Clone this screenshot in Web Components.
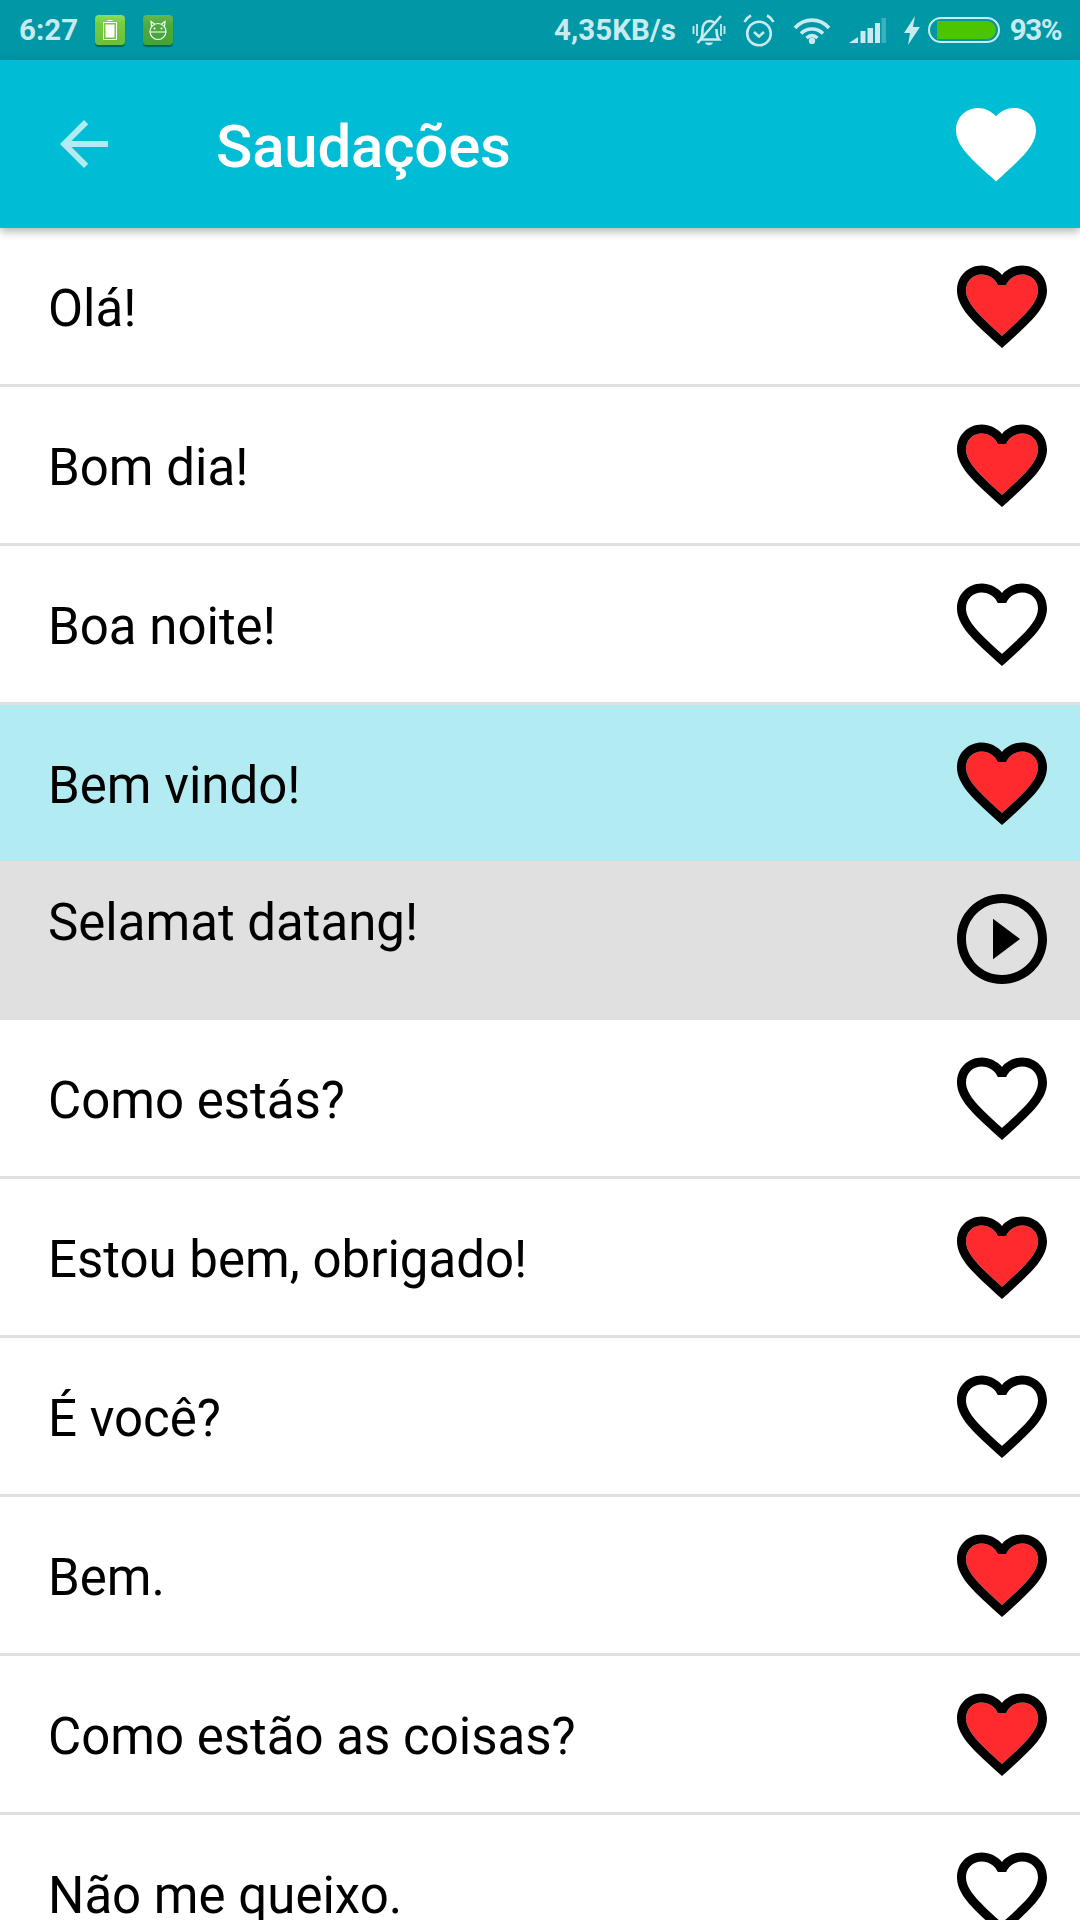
<!DOCTYPE html>
<html lang="pt">
<head>
<meta charset="utf-8">
<title>Saudações</title>
<style>
  html, body { margin: 0; height: 1920px; overflow: hidden; background: #fff; font-family: Roboto, sans-serif; }
  body { display: flex; flex-direction: column; }
</style>
</head>
<body>
<status-bar></status-bar>
<app-toolbar title="Saudações"></app-toolbar>
<phrase-list>
  <phrase-row icon="full">Olá!</phrase-row>
  <phrase-row icon="full">Bom dia!</phrase-row>
  <phrase-row icon="empty">Boa noite!</phrase-row>
  <phrase-row icon="full" state="active">Bem vindo!</phrase-row>
  <phrase-row icon="play" state="open">Selamat datang!</phrase-row>
  <phrase-row icon="empty">Como estás?</phrase-row>
  <phrase-row icon="full">Estou bem, obrigado!</phrase-row>
  <phrase-row icon="empty">É você?</phrase-row>
  <phrase-row icon="full">Bem.</phrase-row>
  <phrase-row icon="full">Como estão as coisas?</phrase-row>
  <phrase-row icon="empty">Não me queixo.</phrase-row>
</phrase-list>

<script>
const HEART_OUTLINE = 'M16.5 3c-1.74 0-3.41.81-4.5 2.09C10.91 3.81 9.24 3 7.5 3 4.42 3 2 5.42 2 8.5c0 3.78 3.4 6.86 8.55 11.54L12 21.35l1.45-1.32C18.6 15.36 22 12.28 22 8.5 22 5.42 19.58 3 16.5 3zm-4.4 15.55l-.1.1-.1-.1C7.14 14.24 4 11.39 4 8.5 4 6.5 5.5 5 7.5 5c1.54 0 3.04.99 3.57 2.36h1.87C13.46 5.99 14.96 5 16.5 5c2 0 3.5 1.5 3.5 3.5 0 2.89-3.14 5.74-7.9 10.05z'
const HEART_INNER = 'M12.1 18.55l-.1.1-.1-.1C7.14 14.24 4 11.39 4 8.5 4 6.5 5.5 5 7.5 5c1.54 0 3.04.99 3.57 2.36h1.87C13.46 5.99 14.96 5 16.5 5c2 0 3.5 1.5 3.5 3.5 0 2.89-3.14 5.74-7.9 10.05z'
const PLAY_OUTLINE = 'M10 16.5l6-4.5-6-4.5v9zM12 2C6.48 2 2 6.48 2 12s4.48 10 10 10 10-4.48 10-10S17.52 2 12 2zm0 18c-4.41 0-8-3.59-8-8s3.59-8 8-8 8 3.59 8 8-3.59 8-8 8z'

class StatusBar extends HTMLElement {
  constructor() {
    super();
    this.attachShadow({ mode: 'open' })
    this.shadowRoot.innerHTML = `
      <style>
        :host {
          display: flex;
          flex: none;
          height: 60px;
          align-items: center;
          justify-content: space-between;
          padding: 0 19px;
          background: #0097a7;
          color: #c9eaef;
          font: 700 29.5px Roboto, sans-serif;
          box-sizing: border-box;
        }
        div { display: flex; align-items: center; }
        svg { display: block; flex: none; }
        .app {
          width: 30px;
          height: 30px;
          border-radius: 4px;
          display: flex;
          align-items: center;
          justify-content: center;
          box-shadow: 0 2px 1px rgba(0, 60, 70, .55);
        }
        .time { width: 58px; margin-right: 18px; }
        .one { background: linear-gradient(#8fdc5c, #74cc3f 30%, #6bbf3a); margin-right: 18px; }
        .two { background: linear-gradient(#6ab84c, #4dab3f 30%, #43a33a); }
        .pct { letter-spacing: -1.5px; }
      </style>
      <div>
        <span class="time">6:27</span>
        <span class="app one">
          <svg width="14" height="20" viewBox="0 0 14 20">
            <path d="M4.5 .5h5" stroke="#fff" fill="none"/>
            <rect x=".5" y="2.5" width="13" height="17" fill="none" stroke="#fff"/>
            <rect x="2.5" y="4.5" width="9" height="13" fill="#fff"/>
          </svg>
        </span>
        <span class="app two">
          <svg width="24" height="24" viewBox="0 0 24 24" fill="none" stroke="#fff" stroke-width="1.2">
            <circle cx="12" cy="13.5" r="8"/>
            <path d="M4 14h16M5.5 8.5L5 3.5l3.5 2.5M18.5 8.5L19 3.5l-3.5 2.5"/>
            <circle cx="8.5" cy="10.5" r="1" fill="#fff" stroke="none"/>
            <circle cx="15.5" cy="10.5" r="1" fill="#fff" stroke="none"/>
          </svg>
        </span>
      </div>
      <div>
        <span style="margin-right:16px">4,35KB/s</span>
        <svg width="34" height="33" viewBox="0 0 34 33" fill="none" stroke="currentColor" stroke-width="2.6" style="margin-right:17px">
          <path d="M8.5 25.500c1.800-2.300 2-5 2-9.500 0-5.500 3-9 7-9 2.500 0 4.500 1.200 5.800 3M24.500 15c0 4.500.5 8 2.500 10.500H8.500"/>
          <path d="M13 28.500c1 3.500 7 3.500 8 0z" fill="currentColor" stroke="none"/>
          <path d="M5.500 29L29 2"/>
          <path d="M1.500 12v8M5 10v12M29 10v12M32.500 12v8" stroke-width="1.8"/>
        </svg>
        <svg width="32" height="33" viewBox="0 0 32 33" fill="none" stroke="currentColor" stroke-width="2.6" style="margin-right:18px">
          <circle cx="16" cy="19.5" r="11.8"/>
          <path d="M11 18l5 4.500 5-4.500"/>
          <path d="M1.500 8c1.500-3 3.500-5 6.500-6.500M30.500 8c-1.500-3-3.500-5-6.500-6.500"/>
        </svg>
        <svg width="38" height="27" viewBox="0 0 38 27" fill="none" stroke="currentColor" stroke-width="3.6" style="margin-right:18px">
          <path d="M2 11C11 .5 27 .5 36 11"/>
          <path d="M8 16.500c6-6 16-6 22 0"/>
          <path d="M13.500 21c3.500-3 7.500-3 11 0"/>
          <circle cx="19" cy="24" r="3.2" fill="currentColor" stroke="none"/>
        </svg>
        <svg width="37" height="25" viewBox="0 0 37 25" fill="currentColor" style="margin-right:18px">
          <path d="M0 25l9-6v6z"/>
          <rect x="11.500" y="13" width="5" height="12"/>
          <rect x="18.500" y="10" width="5.500" height="15"/>
          <rect x="26" y="5" width="5" height="20"/>
          <rect x="32.500" y="0" width="4.500" height="25" opacity=".3"/>
        </svg>
        <svg width="16" height="29" viewBox="0 0 16 29" fill="currentColor" style="margin-right:8px">
          <path d="M11 0L0 17h6L4 29 16 11H9z"/>
        </svg>
        <svg width="72" height="26" viewBox="0 0 72 26" style="margin-right:10px">
          <rect x="1" y="1" width="70" height="24" rx="12" fill="none" stroke="currentColor" stroke-width="2"/>
          <path d="M9 4h50a9 9 0 0 1 0 18H9z" fill="#4cc400"/>
        </svg>
        <span class="pct">93%</span>
      </div>
    `
  }
}

class AppToolbar extends HTMLElement {
  constructor() {
    super();
    this.attachShadow({ mode: 'open' })
  }

  connectedCallback() {
    this.shadowRoot.innerHTML = `
      <style>
        :host {
          display: flex;
          flex: none;
          position: relative;
          z-index: 2;
          height: 168px;
          align-items: center;
          padding: 0 36px 0 48px;
          background: #00bcd4;
          box-shadow: 0 3px 9px rgba(0, 0, 0, .32);
          box-sizing: border-box;
        }
        svg { display: block; flex: none; }
        h1 {
          flex: 1;
          margin: 0 0 0 96px;
          padding-top: 5px;
          color: #fff;
          font: 500 60px Roboto, sans-serif;
          letter-spacing: -.2px;
        }
      </style>
      <svg width="72" height="72" viewBox="0 0 24 24" fill="#b2ebf2">
        <path d="M20 11H7.83l5.59-5.59L12 4l-8 8 8 8 1.41-1.41L7.83 13H20v-2z"/>
      </svg>
      <h1>${this.getAttribute('title')}</h1>
      <svg width="96" height="96" viewBox="0 0 24 24" fill="#fff">
        <path d="M12 21.35l-1.45-1.32C5.4 15.36 2 12.28 2 8.5 2 5.42 4.42 3 7.5 3c1.74 0 3.41.81 4.5 2.09C13.09 3.81 14.76 3 16.5 3 19.58 3 22 5.42 22 8.5c0 3.78-3.4 6.86-8.55 11.54L12 21.35z"/>
      </svg>
    `
  }
}

class PhraseList extends HTMLElement {
  constructor() {
    super();
    this.attachShadow({ mode: 'open' })
    this.shadowRoot.innerHTML = `
      <style>
        :host { display: block; flex: 1; min-height: 0; overflow: hidden; }
      </style>
      <slot></slot>
    `
  }
}

class PhraseRow extends HTMLElement {
  constructor() {
    super();
    this.attachShadow({ mode: 'open' })
  }

  connectedCallback() {
    this.shadowRoot.innerHTML = `
      <style>
        :host {
          display: flex;
          height: 159px;
          align-items: center;
          padding: 0 24px 0 48px;
          border-bottom: 3px solid #e0e0e0;
          background: #fff;
          box-sizing: border-box;
          color: #000;
          font: 400 51px/60px Roboto, sans-serif;
        }
        :host([state="active"]) { height: 156px; border-bottom: 0; background: #b2ebf2; }
        :host([state="open"]) { background: #e0e0e0; }
        .text { flex: 1; padding-top: 6px; }
        :host([state="open"]) .text { align-self: flex-start; padding-top: 32px; }
        svg { display: block; flex: none; }
      </style>
      <span class="text"><slot></slot></span>
      ${this._iconTemplate()}
    `
  }

  _iconTemplate() {
    const icon = this.getAttribute('icon')
    if (icon === 'play') {
      return `<svg width="108" height="108" viewBox="0 0 24 24"><path d="${PLAY_OUTLINE}"/></svg>`
    }
    const inner = icon === 'full' ? `<path d="${HEART_INNER}" fill="#ff2a2e"/>` : ''
    return `<svg width="108" height="108" viewBox="0 0 24 24">${inner}<path d="${HEART_OUTLINE}"/></svg>`
  }
}

customElements.define('status-bar', StatusBar)
customElements.define('app-toolbar', AppToolbar)
customElements.define('phrase-list', PhraseList)
customElements.define('phrase-row', PhraseRow)
</script>
</body>
</html>
